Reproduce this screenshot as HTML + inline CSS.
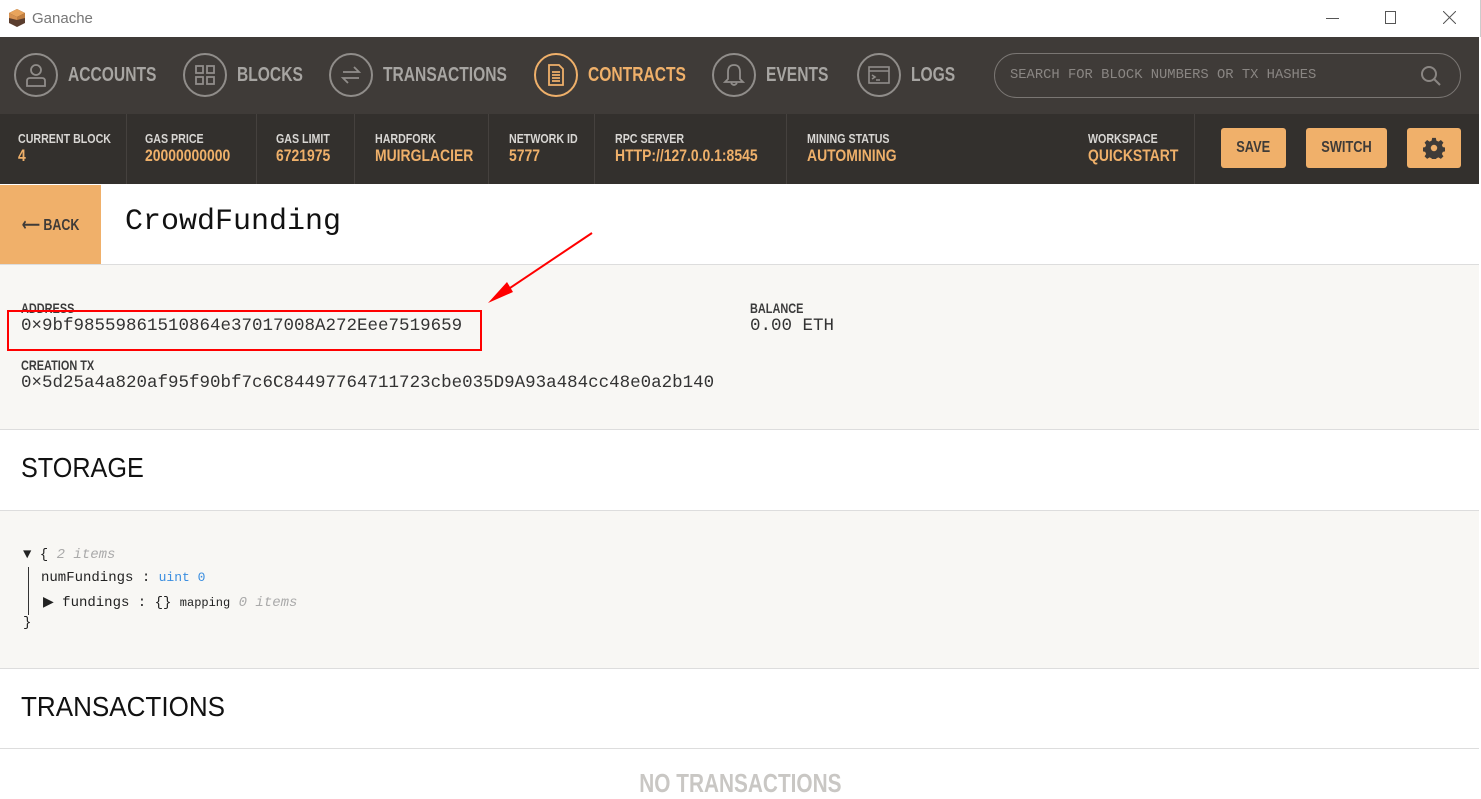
<!DOCTYPE html>
<html><head><meta charset="utf-8"><style>
*{margin:0;padding:0;box-sizing:border-box}
body{width:1481px;height:792px;overflow:hidden;background:#fff;font-family:"Liberation Sans",sans-serif;position:relative}
.cond{font-family:"Liberation Sans",sans-serif;font-weight:bold;white-space:nowrap}
.sq{display:inline-block;transform:scaleX(.78);transform-origin:left center;white-space:nowrap}
.sqc{display:inline-block;transform:scaleX(.8);transform-origin:center;white-space:nowrap}
.abs{position:absolute}
#title{height:37px;background:#fff;border-right:1px solid #ccc}
#nav{top:37px;left:0;width:1479px;height:77px;background:#3f3b38}
.ni{position:absolute;top:16px;height:44px;display:flex;align-items:center;color:#a7a5a2;font-size:20px}
.ni .c{width:44px;height:44px;border:2px solid #908d8a;border-radius:50%;margin-right:10px;display:flex;align-items:center;justify-content:center;flex:none}
.ni.act{color:#efb06a}.ni.act .c{border-color:#efb06a}
#stats{top:114px;left:0;width:1479px;height:70px;background:#33302d}
.st{position:absolute;top:0;height:70px;border-right:1px solid #45413e;padding:17px 0 0 18px}
.st .l{color:#d8d6d3;font-size:13px;height:15px}
.st .v{color:#efb06a;font-size:17px;margin-top:0}
.st .sq{transform:scaleX(.82)}
.btn{position:absolute;top:128px;height:40px;background:#f0b06a;border-radius:3px;color:#3f3b38;font-size:16px;display:flex;align-items:center;justify-content:center}
.mono{font-family:"Liberation Mono",monospace}
.lab{font-size:14px;color:#3b3b3b}
.val{font-size:17.5px;color:#333}
.sec{left:0;width:1479px;border-bottom:1px solid #ddd}
h2{font-family:"Liberation Sans",sans-serif;font-size:28px;font-weight:normal;color:#111;white-space:nowrap}
</style></head><body>
<div id="title" class="abs" style="top:0;left:0;width:1481px">
<svg class="abs" style="left:8px;top:8px" width="18" height="20" viewBox="0 0 18 20"><path d="M9 1L17 5V15L9 19L1 15V5Z" fill="#5a3d2e"/><path d="M9 1L17 5L9 9L1 5Z" fill="#e8a45c"/><path d="M1 5L9 9V12L1 10Z" fill="#d89250"/><path d="M17 5L9 9V12L17 10Z" fill="#c07e40"/></svg>
<div class="abs" style="left:32px;top:10px;font-size:15px;color:#777">Ganache</div>
<div class="abs" style="left:1326px;top:18px;width:13px;height:1px;background:#555"></div>
<div class="abs" style="left:1385px;top:11px;width:11px;height:13px;border:1px solid #555"></div>
<svg class="abs" style="left:1443px;top:11px" width="13" height="13"><path d="M0 0L13 13M13 0L0 13" stroke="#555" stroke-width="1"/></svg>
</div>
<div id="nav" class="abs cond">
<div class="ni" style="left:14px"><div class="c"><svg width="24" height="26" viewBox="0 0 24 26" fill="none" stroke="#908d8a" stroke-width="1.8"><circle cx="12" cy="8" r="5"/><path d="M3 24V19Q3 16 6 16H18Q21 16 21 19V24Z"/></svg></div><span class="sq">ACCOUNTS</span></div>
<div class="ni" style="left:183px"><div class="c"><svg width="22" height="22" viewBox="0 0 22 22" fill="none" stroke="#908d8a" stroke-width="1.8"><rect x="2" y="2" width="7" height="7"/><rect x="13" y="2" width="7" height="7"/><rect x="2" y="13" width="7" height="7"/><rect x="13" y="13" width="7" height="7"/></svg></div><span class="sq">BLOCKS</span></div>
<div class="ni" style="left:329px"><div class="c"><svg width="24" height="24" viewBox="0 0 24 24" fill="none" stroke="#908d8a" stroke-width="1.8"><path d="M4 9H20L15 4M20 15H4L9 20"/></svg></div><span class="sq">TRANSACTIONS</span></div>
<div class="ni act" style="left:534px"><div class="c"><svg width="20" height="24" viewBox="0 0 20 24" fill="none" stroke="#efb06a" stroke-width="1.8"><path d="M3 2H13L17 6V22H3Z"/><path d="M6 9H14M6 12H14M6 15H14M6 18H14"/></svg></div><span class="sq">CONTRACTS</span></div>
<div class="ni" style="left:712px"><div class="c"><svg width="22" height="26" viewBox="0 0 22 26" fill="none" stroke="#908d8a" stroke-width="1.8"><path d="M11 3Q5 3 5 10V17L2 20H20L17 17V10Q17 3 11 3ZM8 21Q11 25 14 21"/></svg></div><span class="sq">EVENTS</span></div>
<div class="ni" style="left:857px"><div class="c"><svg width="24" height="22" viewBox="0 0 24 22" fill="none" stroke="#908d8a" stroke-width="1.6"><rect x="2" y="3" width="20" height="16"/><path d="M2 7H22M5 11L8 13L5 15M9 16H13"/></svg></div><span class="sq">LOGS</span></div>
<div class="abs mono" style="left:994px;top:16px;width:467px;height:45px;border:1px solid #7a7673;border-radius:23px;color:#8a8683;font-size:13.8px;font-weight:normal;padding:14px 0 0 15px">SEARCH FOR BLOCK NUMBERS OR TX HASHES
<svg class="abs" style="right:18px;top:11px" width="22" height="22" viewBox="0 0 22 22" fill="none" stroke="#8a8683" stroke-width="2"><circle cx="9" cy="9" r="7"/><path d="M14 14L20 20"/></svg></div>
</div>
<div id="stats" class="abs cond">
<div class="st" style="left:0;width:127px"><div class="l"><span class="sq">CURRENT BLOCK</span></div><div class="v"><span class="sq">4</span></div></div>
<div class="st" style="left:127px;width:130px"><div class="l"><span class="sq">GAS PRICE</span></div><div class="v"><span class="sq">20000000000</span></div></div>
<div class="st" style="left:257px;width:98px;padding-left:19px"><div class="l"><span class="sq">GAS LIMIT</span></div><div class="v"><span class="sq">6721975</span></div></div>
<div class="st" style="left:356px;width:133px;padding-left:19px"><div class="l"><span class="sq">HARDFORK</span></div><div class="v"><span class="sq">MUIRGLACIER</span></div></div>
<div class="st" style="left:489px;width:106px;padding-left:20px"><div class="l"><span class="sq">NETWORK ID</span></div><div class="v"><span class="sq">5777</span></div></div>
<div class="st" style="left:595px;width:192px;padding-left:20px"><div class="l"><span class="sq">RPC SERVER</span></div><div class="v"><span class="sq">HTTP://127.0.0.1:8545</span></div></div>
<div class="st" style="left:787px;width:408px;padding-left:20px"><div class="l"><span class="sq">MINING STATUS</span></div><div class="v"><span class="sq">AUTOMINING</span></div><div class="abs" style="left:301px;top:17px"><div class="l"><span class="sq">WORKSPACE</span></div><div class="v"><span class="sq">QUICKSTART</span></div></div></div>
</div>
<div class="btn cond" style="left:1221px;width:65px"><span class="sqc">SAVE</span></div>
<div class="btn cond" style="left:1306px;width:81px"><span class="sqc">SWITCH</span></div>
<div class="btn" style="left:1407px;width:54px"><svg width="22" height="22" viewBox="0 0 24 24"><path fill="#3f3b38" d="M10 1h4l.6 3 2.3 1 2.6-1.7 2.8 2.8-1.7 2.6 1 2.3 3 .6v4l-3 .6-1 2.3 1.7 2.6-2.8 2.8-2.6-1.7-2.3 1-.6 3h-4l-.6-3-2.3-1-2.6 1.7-2.8-2.8 1.7-2.6-1-2.3-3-.6v-4l3-.6 1-2.3-1.7-2.6 2.8-2.8 2.6 1.7 2.3-1z"/><circle cx="12" cy="12" r="3.5" fill="#f0b06a"/></svg></div>
<div class="abs sec" style="top:184px;height:81px;background:#fff">
<div class="abs cond" style="left:0;top:1px;width:101px;height:79px;background:#f0b06a;color:#3f3b38;font-size:16px;padding:30px 0 0 22px"><span class="sq">⟵ BACK</span></div>
<div class="abs mono" style="left:125px;top:21px;font-size:30px;color:#111">CrowdFunding</div>
</div>
<div class="abs sec" style="top:265px;height:165px;background:#f8f7f4">
<div class="abs cond lab" style="left:21px;top:35px"><span class="sq">ADDRESS</span></div>
<div class="abs mono val" style="left:21px;top:51px">0×9bf98559861510864e37017008A272Eee7519659</div>
<div class="abs" style="left:7px;top:45px;width:475px;height:41px;border:2px solid #f00"></div>
<div class="abs cond lab" style="left:750px;top:35px"><span class="sq">BALANCE</span></div>
<div class="abs mono val" style="left:750px;top:51px">0.00 ETH</div>
<div class="abs cond lab" style="left:21px;top:92px"><span class="sq">CREATION TX</span></div>
<div class="abs mono val" style="left:21px;top:108px">0×5d25a4a820af95f90bf7c6C84497764711723cbe035D9A93a484cc48e0a2b140</div>
</div>
<svg class="abs" style="left:485px;top:230px" width="110" height="75"><path d="M107 3L10 68" stroke="#f00" stroke-width="2"/><path d="M3 73L22 52L28 62Z" fill="#f00"/></svg>
<div class="abs sec" style="top:430px;height:81px;background:#fff"><h2 class="abs" style="left:21px;top:22px"><span class="sq" style="transform:scaleX(.9)">STORAGE</span></h2></div>
<div class="abs sec" style="top:511px;height:158px;background:#f8f7f4;font-family:'Liberation Mono',monospace;font-size:14px;color:#222">
<div class="abs" style="left:23px;top:36px">▼ {  <i style="color:#aaa">2 items</i></div>
<div class="abs" style="left:28px;top:56px;width:1px;height:48px;background:#333"></div>
<div class="abs" style="left:41px;top:59px">numFundings : <span style="color:#3a8ee0;font-size:13px">uint 0</span></div>
<div class="abs" style="left:43px;top:83px">▶ fundings : {}  <span style="font-size:12px">mapping</span> <i style="color:#aaa">0 items</i></div>
<div class="abs" style="left:23px;top:104px">}</div>
</div>
<div class="abs sec" style="top:669px;height:80px;background:#fff"><h2 class="abs" style="left:21px;top:22px"><span class="sq" style="transform:scaleX(.93)">TRANSACTIONS</span></h2></div>
<div class="abs cond" style="left:0;width:1481px;top:768px;text-align:center;font-size:26px;color:#c9c7c4"><span class="sqc">NO TRANSACTIONS</span></div>
</body></html>
